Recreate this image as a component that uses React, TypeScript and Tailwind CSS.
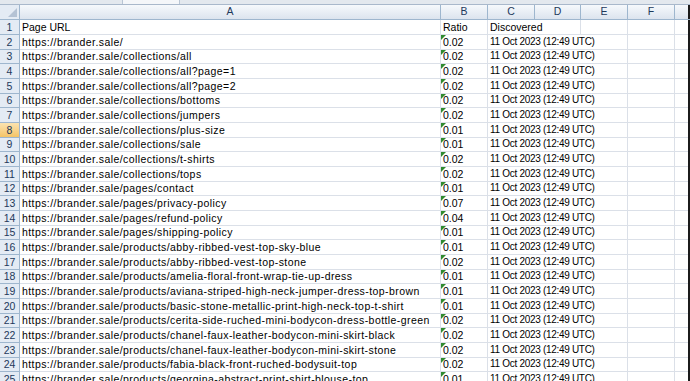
const rows: [string, string, string][] = [
  ['Page URL', 'Ratio', 'Discovered'],
  ['https://brander.sale/', '0.02', ''],
  ['https://brander.sale/collections/all', '0.02', ''],
  ['https://brander.sale/collections/all?page=1', '0.02', ''],
  ['https://brander.sale/collections/all?page=2', '0.02', ''],
  ['https://brander.sale/collections/bottoms', '0.02', ''],
  ['https://brander.sale/collections/jumpers', '0.02', ''],
  ['https://brander.sale/collections/plus-size', '0.01', ''],
  ['https://brander.sale/collections/sale', '0.01', ''],
  ['https://brander.sale/collections/t-shirts', '0.02', ''],
  ['https://brander.sale/collections/tops', '0.02', ''],
  ['https://brander.sale/pages/contact', '0.01', ''],
  ['https://brander.sale/pages/privacy-policy', '0.07', ''],
  ['https://brander.sale/pages/refund-policy', '0.04', ''],
  ['https://brander.sale/pages/shipping-policy', '0.01', ''],
  ['https://brander.sale/products/abby-ribbed-vest-top-sky-blue', '0.01', ''],
  ['https://brander.sale/products/abby-ribbed-vest-top-stone', '0.02', ''],
  ['https://brander.sale/products/amelia-floral-front-wrap-tie-up-dress', '0.01', ''],
  ['https://brander.sale/products/aviana-striped-high-neck-jumper-dress-top-brown', '0.01', ''],
  ['https://brander.sale/products/basic-stone-metallic-print-high-neck-top-t-shirt', '0.01', ''],
  ['https://brander.sale/products/cerita-side-ruched-mini-bodycon-dress-bottle-green', '0.02', ''],
  ['https://brander.sale/products/chanel-faux-leather-bodycon-mini-skirt-black', '0.02', ''],
  ['https://brander.sale/products/chanel-faux-leather-bodycon-mini-skirt-stone', '0.02', ''],
  ['https://brander.sale/products/fabia-black-front-ruched-bodysuit-top', '0.02', ''],
  ['https://brander.sale/products/georgina-abstract-print-shirt-blouse-top', '0.01', ''],
];

const DATE = '11 Oct 2023 (12:49 UTC)';

const colHead =
  'h-full flex items-center justify-center border-r border-[#9eb6ce] bg-gradient-to-b from-[#f6f9fc] to-[#dce4ee] text-[#1e395b]';

const App = () => {
  return (
    <div className="w-[690px] h-[381px] overflow-hidden bg-white font-['Liberation_Sans',Arial,sans-serif] text-[10.5px] text-black">
      {/* remnant of the formula bar above */}
      <div className="h-[5px] flex bg-[#e3e8ee] border-b border-[#a9b8cb]">
        <div className="w-[122px]" />
        <div className="w-[58px] bg-[#f4f6f9] border-x border-[#b9c5d4]" />
      </div>

      {/* column letters */}
      <div className="h-[15px] flex border-b border-[#9eb6ce]">
        <div className="w-[20px] h-full relative border-r border-[#9eb6ce] bg-[#e4ebf4]">
          <div className="absolute right-[2px] bottom-[2px] w-0 h-0 border-l-[9px] border-l-transparent border-b-[9px] border-b-[#b4c2d4]" />
        </div>
        <div className={`w-[421px] ${colHead}`}>A</div>
        <div className={`w-[47px] ${colHead}`}>B</div>
        <div className={`w-[47px] ${colHead}`}>C</div>
        <div className={`w-[46px] ${colHead}`}>D</div>
        <div className={`w-[47px] ${colHead}`}>E</div>
        <div className={`w-[47px] ${colHead}`}>F</div>
        <div className="w-[13px] h-full bg-gradient-to-b from-[#f6f9fc] to-[#dce4ee]" />
        <div className="w-[2px] h-full bg-[#1b1b1b]" />
      </div>

      {rows.map(([url, ratio, disc], i) => {
        const first = i === 0;
        const selected = i === 7;
        return (
          <div
            key={i}
            className={`flex leading-none ${i % 3 === 2 ? 'h-[14px]' : 'h-[15px]'}`}
          >
            <div
              className={`w-[20px] h-full flex items-center justify-center border-r border-b border-[#9eb6ce] text-[#1e395b] ${
                selected ? 'bg-gradient-to-b from-[#fbe3b0] to-[#f4c466]' : 'bg-[#e4ebf4]'
              }`}
            >
              {i + 1}
            </div>
            <div
              className={`w-[421px] h-full flex items-end pb-[2px] pl-[2px] border-r border-b border-[#dbe0e8] whitespace-nowrap ${
                first ? '' : 'tracking-[0.42px]'
              }`}
            >
              {url}
            </div>
            <div className="w-[47px] h-full relative flex items-end pb-[2px] pl-[2px] border-r border-b border-[#dbe0e8]">
              {!first && (
                <div className="absolute left-0 top-0 w-0 h-0 border-t-[5px] border-t-[#2f8a2f] border-r-[5px] border-r-transparent" />
              )}
              {ratio}
            </div>
            <div
              className={`w-[47px] h-full flex items-end pb-[2px] pl-[2px] border-b border-[#dbe0e8] whitespace-nowrap overflow-visible relative z-10 ${
                first ? '' : 'text-[10px] tracking-[-0.3px]'
              }`}
            >
              {first ? disc : DATE}
            </div>
            <div
              className={`w-[46px] h-full border-b border-[#dbe0e8] ${first ? 'border-r' : ''}`}
            />
            <div className="w-[47px] h-full border-r border-b border-[#dbe0e8]" />
            <div className="w-[47px] h-full border-r border-b border-[#dbe0e8]" />
            <div className="w-[13px] h-full border-b border-[#dbe0e8]" />
            <div className="w-[2px] h-full bg-[#1b1b1b]" />
          </div>
        );
      })}
    </div>
  );
};

export default App;
